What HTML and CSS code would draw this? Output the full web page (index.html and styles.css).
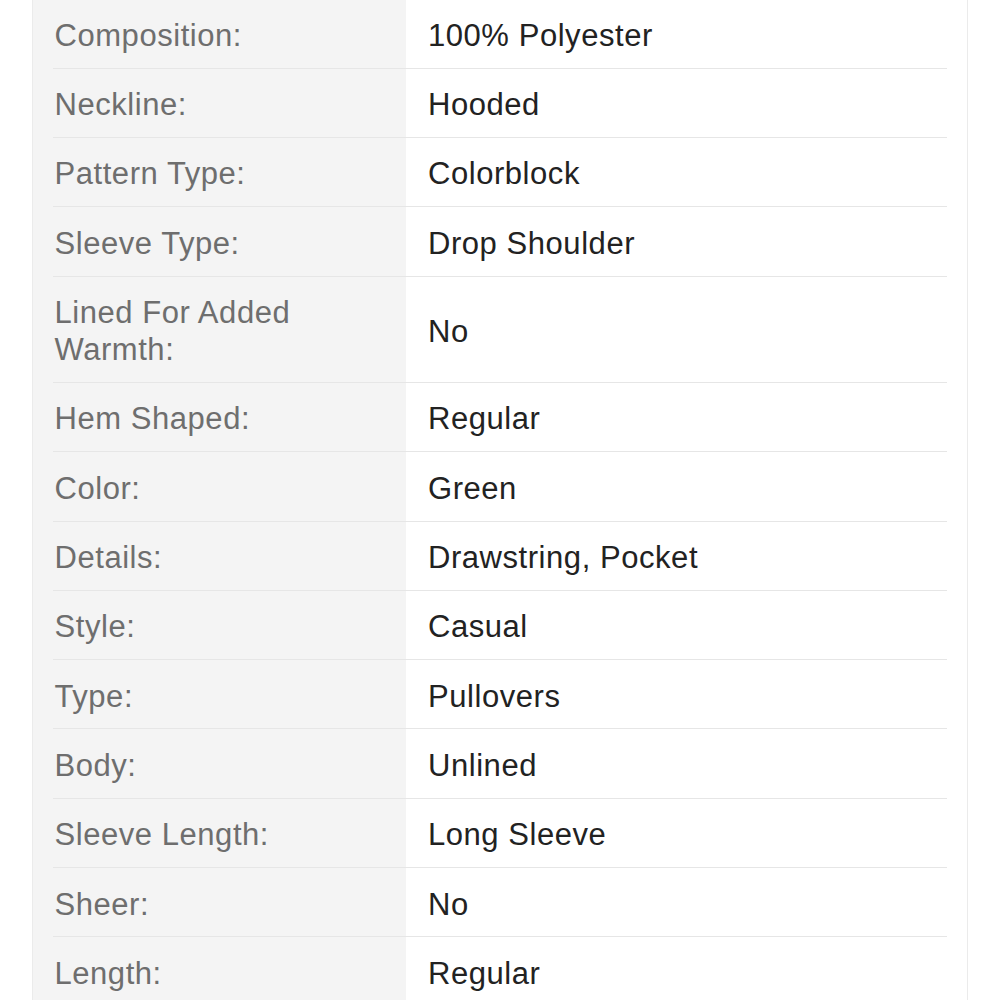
FILE: index.html
```html
<!DOCTYPE html>
<html lang="en">
<head>
<meta charset="utf-8">
<title>Product details</title>
<link rel="stylesheet" href="styles.css">
</head>
<body>
<div class="panel">
  <div class="row"><div class="label">Composition:</div><div class="value">100% Polyester</div></div>
  <div class="row"><div class="label">Neckline:</div><div class="value">Hooded</div></div>
  <div class="row"><div class="label">Pattern Type:</div><div class="value">Colorblock</div></div>
  <div class="row"><div class="label">Sleeve Type:</div><div class="value">Drop Shoulder</div></div>
  <div class="row"><div class="label">Lined For Added Warmth:</div><div class="value">No</div></div>
  <div class="row"><div class="label">Hem Shaped:</div><div class="value">Regular</div></div>
  <div class="row"><div class="label">Color:</div><div class="value">Green</div></div>
  <div class="row"><div class="label">Details:</div><div class="value">Drawstring, Pocket</div></div>
  <div class="row"><div class="label">Style:</div><div class="value">Casual</div></div>
  <div class="row"><div class="label">Type:</div><div class="value">Pullovers</div></div>
  <div class="row"><div class="label">Body:</div><div class="value">Unlined</div></div>
  <div class="row"><div class="label">Sleeve Length:</div><div class="value">Long Sleeve</div></div>
  <div class="row"><div class="label">Sheer:</div><div class="value">No</div></div>
  <div class="row"><div class="label">Length:</div><div class="value">Regular</div></div>
</div>
</body>
</html>
```
FILE: styles.css
```css
html, body {
  margin: 0;
  padding: 0;
  background: #ffffff;
}

body {
  font-family: "Liberation Sans", Arial, sans-serif;
  font-size: 31px;
  letter-spacing: 0.55px;
  overflow: hidden;
  height: 1000px;
}

.panel {
  margin: -0.8px 32px 0;
  padding: 0 20px;
  border-left: 1px solid #ebebeb;
  border-right: 1px solid #ebebeb;
  background: linear-gradient(to right, #f4f4f4 373px, #ffffff 373px);
}

.row {
  display: grid;
  grid-template-columns: 353px 1fr;
  border-bottom: 1px solid #e6e6e6;
}

.label,
.value {
  padding: 17.5px 0 13.83px;
  line-height: 37px;
}

.label {
  color: #6e6e6e;
  padding-left: 1.5px;
  padding-right: 20px;
}

.value {
  color: #222222;
  padding-left: 22px;
  display: flex;
  align-items: center;
}
```
